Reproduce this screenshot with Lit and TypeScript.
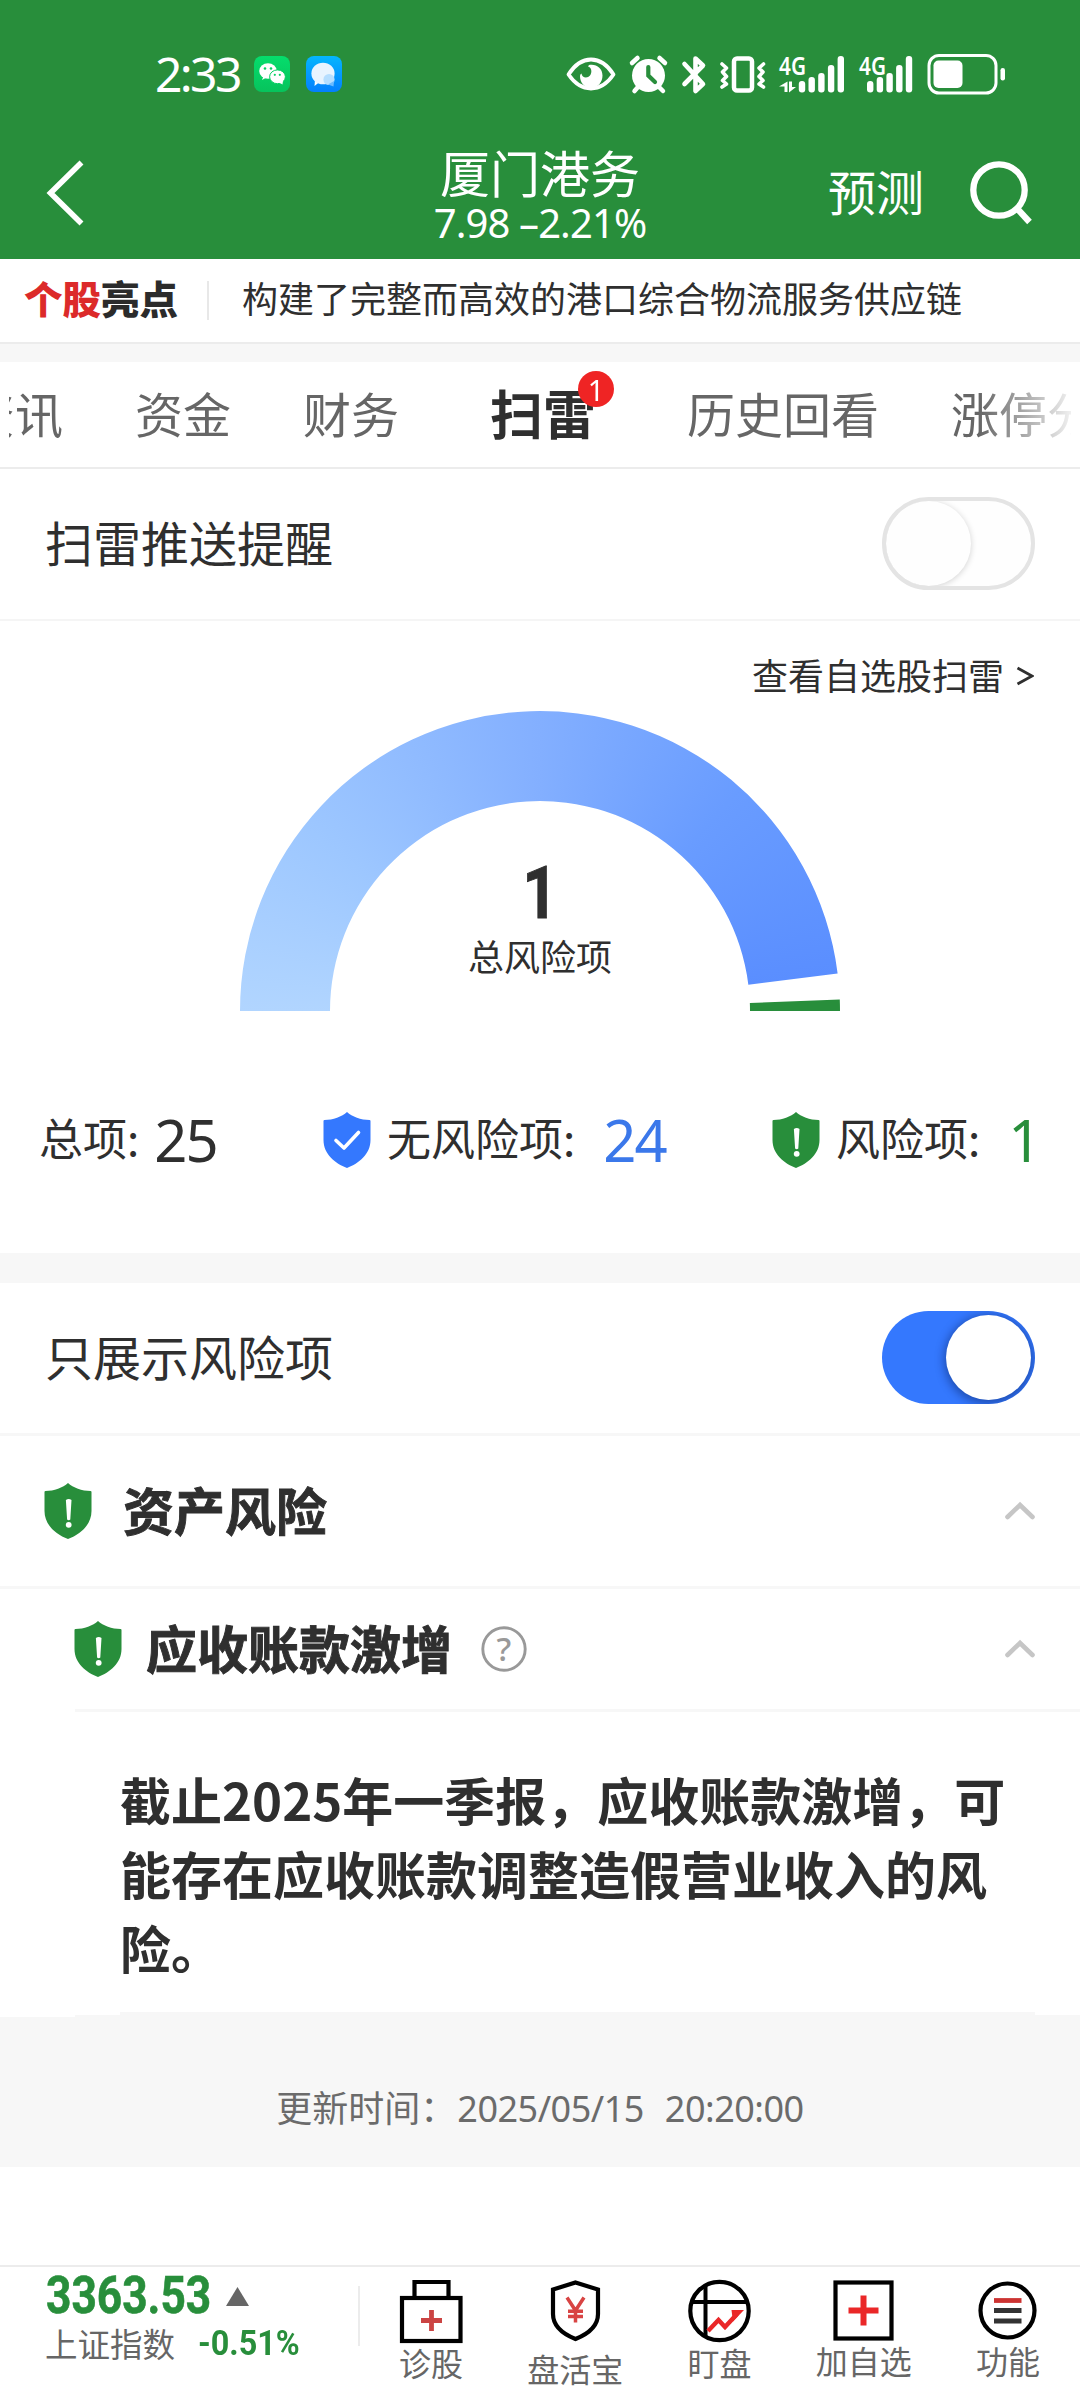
import { LitElement, html, css, svg } from "lit";
import { customElement, property } from "lit/decorators.js";
import { classMap } from "lit/directives/class-map.js";

@customElement("shield-icon")
class ShieldIcon extends LitElement {
  @property() kind = "risk";
  static styles = css`
    :host { display: block; width: 48px; height: 56px; flex: none; }
    .svg { display: block; }
    .risk { fill: #288e3b; }
    .safe { fill: #3478fe; }
    .tick { fill: none; stroke: #fff; stroke-width: 3.6; stroke-linecap: round; stroke-linejoin: round; }
    .mark { fill: #fff; }
  `;
  render() {
    const safe = this.kind === "safe";
    return html`<svg class="svg" width="48" height="56" viewBox="0 0 48 56">
      <path class=${safe ? "safe" : "risk"}
        d="M24 0C19 4.500 10 8 1.500 8Q0.500 8 0.500 9V28C0.500 42 12 51.500 24 56C36 51.500 47.500 42 47.500 28V9Q47.500 8 46.500 8C38 8 29 4.500 24 0Z"/>
      ${safe
        ? svg`<path class="tick" d="M13 28.500L21 36L35.500 20.500"/>`
        : svg`<path class="mark" d="M21.900 17Q24.700 15.200 27.500 17L26.300 36.500Q24.700 38 23.100 36.500Z"/><circle class="mark" cx="24.700" cy="41.800" r="2.900"/>`}
    </svg>`;
  }
}

@customElement("toggle-switch")
class ToggleSwitch extends LitElement {
  @property({ type: Boolean }) on = false;
  static styles = css`
    :host { display: block; flex: none; margin-top: -1px; }
    .track {
      box-sizing: border-box; width: 153px; height: 93px; border-radius: 47px; border: 4px solid #e4e4e4;
      background: #fefefe; display: flex; overflow: hidden;
    }
    .knob { width: 85px; height: 85px; border-radius: 50%; background: #fefefe; box-shadow: 0 1px 6px rgba(0, 0, 0, 0.18); }
    .track.on { background: #3478fe; border: 0; padding: 4px; justify-content: flex-end; }
    .track.on .knob { background: #fff; box-shadow: 0 2px 10px 2px rgba(0, 20, 70, 0.42); }
  `;
  render() {
    return html`<div class=${classMap({ track: true, on: this.on })}><div class="knob"></div></div>`;
  }
}

const BARS = [
  [0, 80], [9.7, 76], [19.4, 72], [29.1, 64], [38.8, 55],
];

function signal(x: number) {
  return BARS.map(([dx, y]) => svg`<rect x=${x + dx} y=${y} width="6.400" height=${91.5 - y} rx="3"/>`);
}

const statusIcons = html`<svg class="block" width="441" height="46" viewBox="567 50 441 46" fill="#fff">
  <path d="M569.500 73.500Q579 58.500 592 58.500T614.500 73.500Q605 87.500 592 87.500T569.500 73.500Z" fill="none" stroke="#fff" stroke-width="3.800" stroke-linejoin="round"/>
  <path d="M590 64C597 62.500 603.500 67 603.500 74.500C603.500 81 599 87 592 87C585 87 581 81 581 75Q581 73 582.500 72.500C583 77 588.500 77.500 591 74.500C593.500 71 592.500 66.500 589 65.500Z"/>
  <circle cx="649.500" cy="74.500" r="16.500"/>
  <path d="M633 62L638.500 57M666 62L660.500 57" stroke="#fff" stroke-width="4.500" stroke-linecap="round"/>
  <path d="M639 86L635.500 90M660 86L664 90" stroke="#fff" stroke-width="4.500" stroke-linecap="round"/>
  <path d="M649.300 66V74.500L656 81" fill="none" stroke="#288e3b" stroke-width="4.200" stroke-linecap="round"/>
  <path d="M685.500 63L704 83L696.500 90V57.500L704 64.500L685.500 83" fill="none" stroke="#fff" stroke-width="4.600" stroke-linecap="round" stroke-linejoin="round"/>
  <rect x="735" y="57.500" width="18" height="32" rx="3" fill="none" stroke="#fff" stroke-width="4.500"/>
  <path d="M723 63L727.500 67L723.500 71L727.500 75.500L723.500 79.500L727.500 83L723 86M764.500 63L760 67L764 71L760 75.500L764 79.500L760 83L764.500 86" fill="none" stroke="#fff" stroke-width="3.600" stroke-linecap="round" stroke-linejoin="round"/>
  <text class="net" x="780" y="73.500" textLength="27" lengthAdjust="spacingAndGlyphs">4G</text>
  <path d="M788.500 80.500V91H785.500V85.500H780Z M790 80.500H793V86H797L790 91.500Z"/>
  ${signal(799.8)}
  <text class="net" x="860" y="73.500" textLength="27" lengthAdjust="spacingAndGlyphs">4G</text>
  ${signal(868)}
  <rect x="930" y="54.500" width="67" height="37.500" rx="10" fill="none" stroke="#fff" stroke-width="3"/>
  <rect x="934.500" y="59.500" width="29" height="27.500" rx="5"/>
  <rect x="1001.500" y="67" width="4.500" height="12.500" rx="2.200"/>
</svg>`;

const appIcons = html`<svg class="block apps" width="88" height="36" viewBox="0 0 88 36">
  <defs>
    <linearGradient id="wx" x2="0" y2="1"><stop stop-color="#05dd6c"/><stop offset="1" stop-color="#07c35c"/></linearGradient>
    <linearGradient id="msg" x2="0" y2="1"><stop stop-color="#04b6fe"/><stop offset="1" stop-color="#047ffd"/></linearGradient>
  </defs>
  <rect width="36" height="36" rx="8" fill="url(#wx)"/>
  <path d="M8 24L9.500 20H15Z" fill="#fff"/><ellipse cx="14" cy="15" rx="8.800" ry="7.700" fill="#fff"/>
  <ellipse cx="23.500" cy="20.800" rx="7.900" ry="6.900" fill="#fff" stroke="#07cf63" stroke-width="1"/><path d="M28.500 28.500L24 26L29 24.500Z" fill="#fff"/>
  <g fill="#07d166"><circle cx="11" cy="12.500" r="1.300"/><circle cx="17" cy="12.500" r="1.300"/><circle cx="20.800" cy="18.800" r="1.100"/><circle cx="25.800" cy="18.800" r="1.100"/></g>
  <rect x="52" width="36" height="36" rx="8" fill="url(#msg)"/>
  <path d="M60.500 30L61 24H68Z" fill="#fff"/><ellipse cx="69" cy="17.500" rx="11.600" ry="10.800" fill="#e8f4ff"/>
  <circle cx="75" cy="23.500" r="5.600" fill="#b5deff"/><path d="M79.500 30.500L74 28.500L80 25Z" fill="#6cbbff"/>
</svg>`;

const TOOLS = [
  { label: "诊股", cls: "t1", icon: svg`<path d="M14.500 19V3H48.500V19" fill="none" stroke="#000" stroke-width="4.200"/><rect x="2" y="19" width="58.500" height="43" fill="none" stroke="#000" stroke-width="4.200"/><path d="M31.500 31V52M21 41.500H42" stroke="#cb4443" stroke-width="4.800"/>` },
  { label: "盘活宝", cls: "t2", icon: svg`<path d="M31.500 3.500L54 10.500V35C54 47 44 55 31.500 60C19 55 9 47 9 35V10.500Z" fill="none" stroke="#000" stroke-width="4.200"/><path d="M23 18.500L31.500 31.500L40 18.500M31.500 31V43.500M24 32.300H39M24 37.500H39" fill="none" stroke="#d84443" stroke-width="3.500"/>` },
  { label: "盯盘", cls: "t3", icon: svg`<path d="M17.500 6V58M5 23H58" stroke="#000" stroke-width="4"/><path d="M20 52L30.500 41L37 48L49 35" fill="none" stroke="#ea2728" stroke-width="4.400"/><path d="M43.500 31H56L45 42.500Z" fill="#ea2728"/><circle cx="31.500" cy="32" r="29.200" fill="none" stroke="#000" stroke-width="4.200"/>` },
  { label: "加自选", cls: "t4", icon: svg`<rect x="3.500" y="3.500" width="56" height="56" fill="none" stroke="#000" stroke-width="4.200"/><path d="M31.500 16.500V46.500M16.500 31.500H46.500" stroke="#ea2728" stroke-width="6"/>` },
  { label: "功能", cls: "t5", icon: svg`<circle cx="31.500" cy="31.500" r="27" fill="none" stroke="#000" stroke-width="4.200"/><path d="M18 21.500H45.500" stroke="#cc3331" stroke-width="4.800"/><path d="M18 31.500H45.500M18 42H45.500" stroke="#333" stroke-width="4.800"/>` },
];

const TABS = [
  { label: "资讯" }, { label: "资金" }, { label: "财务" },
  { label: "扫雷", active: true, badge: "1" },
  { label: "历史回看" }, { label: "涨停分析" },
];

const chevron = html`<svg class="block" width="30" height="18" viewBox="0 0 30 18"><path d="M2.500 15L15 3L27.500 15" fill="none" stroke="#c6c6c6" stroke-width="4.600" stroke-linecap="round"/></svg>`;

/** Ring sector between two angles measured clockwise from the left end. */
function sector(from: number, to: number, R = 300, r = 210) {
  const at = (deg: number, rad: number) => {
    const a = (deg * Math.PI) / 180;
    return `${(300 - rad * Math.cos(a)).toFixed(2)} ${(300 - rad * Math.sin(a)).toFixed(2)}`;
  };
  return `M${at(from, R)}A${R} ${R} 0 0 1 ${at(to, R)}L${at(to, r)}A${r} ${r} 0 0 0 ${at(from, r)}Z`;
}

@customElement("app-root")
class AppRoot extends LitElement {
  static styles = css`
    :host {
      display: block; width: 1080px; height: 2400px; overflow: hidden; background: #fff; color: #2f2f2f;
      font-family: "Noto Sans CJK SC", "Noto Sans", sans-serif;
    }
    .page { display: flex; flex-direction: column; height: 2400px; white-space: nowrap; }
    .page > * { flex: none; box-sizing: border-box; }
    .block { display: block; flex: none; overflow: visible; }
    .net { font: 600 26px "Noto Sans", sans-serif; }

    .header { background: #288e3b; color: #fff; height: 259px; }
    .status { height: 127px; box-sizing: border-box; padding: 21px 73px 0 155px; display: flex; align-items: center; }
    .clock { width: 99px; font-size: 48px; line-height: 50px; letter-spacing: -2.600px; font-family: "Noto Sans", sans-serif; }
    .apps { margin-right: auto; }
    .nav { height: 132px; display: grid; grid-template-columns: 1fr auto 1fr; align-items: center; padding: 0 46px; }
    .title { text-align: center; }
    .name { font-size: 50px; line-height: 54px; }
    .quote { font-size: 40px; line-height: 40px; letter-spacing: -0.900px; margin-top: 5px; font-family: "Noto Sans", sans-serif; }
    .actions { display: flex; justify-content: flex-end; align-items: center; gap: 45px; font-size: 48px; line-height: 60px; }
    .predict { margin-top: -6px; }

    .highlight { height: 85px; border-bottom: 2px solid #ececec; display: flex; align-items: center; padding-left: 24px; }
    .tag { font-size: 38.500px; font-weight: 900; color: #2b2b2b; width: 183px; line-height: 50px; margin-top: -7px; }
    .red { color: #dc2a2a; }
    .vline { width: 2px; height: 39px; background: #e8e8e8; }
    .desc { font-size: 36px; line-height: 50px; margin: -7px 0 0 33px; }
    .gap { background: #f7f7f7; height: 18px; }

    .tabs { height: 107px; border-bottom: 2px solid #ececec; padding: 0 9px; }
    .scroller { height: 105px; overflow: hidden; display: flex; justify-content: flex-start; mask-image: linear-gradient(to right, #000 970px, transparent 1072px); }
    .tab { flex: none; margin-right: 72px; font-size: 48px; line-height: 100px; color: #666; }
    .tab:first-child { margin-left: -42px; }
    .tab.active { width: 144px; text-align: center; color: #2f2f2f; font-size: 53px; font-weight: 700; position: relative; }
    .badge {
      position: absolute; left: 107px; top: 9px; width: 36px; height: 36px; border-radius: 50%;
      background: #ef2424; color: #fff; font: 400 29px/37px "Noto Sans", sans-serif; text-align: center;
    }

    .row { display: flex; align-items: center; justify-content: space-between; padding: 0 45px; font-size: 48px; }
    .row .label { margin-top: -6px; }
    .push { height: 152px; border-bottom: 2px solid #f5f5f5; }

    .summary { height: 632px; display: flex; flex-direction: column; align-items: stretch; }
    .link { font-size: 36px; line-height: 50px; margin-top: 28px; padding-right: 46px; display: flex; justify-content: flex-end; gap: 12px; }
    .gt { display: block; margin-top: 17px; }
    .gauge { width: 600px; height: 300px; margin: 12px auto 0; display: grid; }
    .gauge > * { grid-area: 1 / 1; }
    .arc { background: conic-gradient(from 270deg at 50% 100%, #b1d5ff 0deg, #9dc7ff 38deg, #83afff 90deg, #699cff 132deg, #5a8eff 173deg); }
    .center { display: flex; flex-direction: column; align-items: center; padding-top: 147px; }
    .total { font: 700 73px/70px Roboto, sans-serif; transform: scaleX(0.85); -webkit-text-stroke: 0.8px #2f2f2f; }
    .caption { font-size: 36px; line-height: 50px; margin-top: 2px; }
    .stats { display: flex; align-items: center; margin-top: 98px; height: 62px; padding-left: 39px; font-size: 44px; }
    .stat { display: flex; align-items: center; }
    .stat.a { width: 284px; }
    .stat.b { width: 449px; }
    .stat .lbl { margin-top: -6px; }
    .stat.b .lbl, .stat.c .lbl { margin-left: 16px; }
    .num { font: 400 58px/60px "Noto Sans", sans-serif; margin: 0 0 0 15px; letter-spacing: -2px; }
    .stat.b .num { margin-left: 28px; color: #3b78ea; }
    .stat.c .num { margin-left: 28px; color: #288e3b; }
    .thick { background: #f7f7f7; height: 30px; }

    .only { height: 153px; border-bottom: 3px solid #f7f7f7; }
    .group { height: 153px; border-bottom: 3px solid #f7f7f7; justify-content: flex-start; font-size: 51px; font-weight: 700; padding-left: 44px; }
    .group .label, .item .label { -webkit-text-stroke: 0.9px #2f2f2f; }
    .group .label { margin: -4px auto 0 31px; }
    .item { height: 123px; margin-left: 75px; padding-left: 0; border-bottom: 3px solid #f7f7f7; justify-content: flex-start; font-size: 51px; font-weight: 700; }
    .item shield-icon { margin-left: -1px; }
    .item .label { margin: -4px 29px 0 24px; }
    .item .help { margin-right: auto; }
    .q { font: 500 33px "Noto Sans", sans-serif; fill: #999; }
    .detail { height: 303px; margin: 0 45px 0 120px; padding-top: 50px; border-bottom: 3px solid #f7f7f7; font-size: 51px; line-height: 74px; font-weight: 700; white-space: normal; word-break: break-all; }
    .detail p { margin: 0; }
    .edge { height: 2px; background: #f7f7f7; margin-left: 75px; }
    .updated { height: 150px; background: #f7f7f7; color: #6b6b6b; display: flex; align-items: baseline; justify-content: center; font-size: 36px; line-height: 50px; padding-top: 64px; }
    .date { font-family: "Noto Sans", sans-serif; letter-spacing: -0.5px; margin-left: 1px; }
    .time { margin-left: 21px; }
    .spacer { height: 98px; }

    .bottom { height: 135px; border-top: 2px solid #ececec; display: flex; }
    .index { width: 358px; padding: 10px 0 0 46px; box-sizing: border-box; color: #288e3b; }
    .line1 { display: flex; align-items: center; height: 38px; }
    .value { width: 180px; font: 700 51px/38px Roboto, sans-serif; -webkit-text-stroke: 0.6px #288e3b; }
    .value span { display: inline-block; transform: scaleX(0.868); transform-origin: 0 50%; }
    .line2 { display: flex; align-items: center; height: 44px; margin-top: 6px; font-size: 32.500px; line-height: 44px; color: #666; margin-left: -1px; }
    .pct { font: 700 35px/44px Roboto, sans-serif; color: #288e3b; transform: scaleX(0.925); transform-origin: 0 50%; margin-left: 23px; padding-top: 2px; }
    .vline2 { width: 2px; height: 60px; background: #ececec; margin-top: 19px; }
    .tools { flex: 1; display: grid; grid-template-columns: repeat(5, 1fr); margin-left: -1px; }
    .tool { display: flex; flex-direction: column; align-items: center; font-size: 32px; line-height: 40px; color: #666; padding-top: 12px; }
    .txt { margin-top: -3px; }
    .t2 .txt { margin-top: 5px; }
    .t3 .txt { margin-top: -1px; }
    .t1 .txt { margin-top: -1px; }
  `;

  render() {
    return html`<div class="page">
      <div class="header">
        <div class="status"><div class="clock">2:33</div>${appIcons}${statusIcons}</div>
        <div class="nav">
          <svg class="block" width="40" height="64" viewBox="0 0 40 64"><path d="M35.500 1.500L4.500 32L35.500 62.500" fill="none" stroke="#fff" stroke-width="5.600"/></svg>
          <div class="title"><div class="name">厦门港务</div><div class="quote">7.98 –2.21%</div></div>
          <div class="actions">
            <span class="predict">预测</span>
            <svg class="block" width="65" height="66" viewBox="0 0 65 66"><circle cx="30" cy="30" r="25.700" fill="none" stroke="#fff" stroke-width="6.300"/><path d="M47.500 48L60.500 62" stroke="#fff" stroke-width="6.300"/></svg>
          </div>
        </div>
      </div>

      <div class="highlight">
        <div class="tag"><span class="red">个股</span>亮点</div><div class="vline"></div>
        <div class="desc">构建了完整而高效的港口综合物流服务供应链</div>
      </div>
      <div class="gap"></div>

      <div class="tabs"><div class="scroller">
        ${TABS.map((t) => html`<div class=${classMap({ tab: true, active: !!t.active })}>${t.label}${t.badge ? html`<span class="badge">${t.badge}</span>` : ""}</div>`)}
      </div></div>

      <div class="row push"><span class="label">扫雷推送提醒</span><toggle-switch></toggle-switch></div>

      <div class="summary">
        <div class="link"><span>查看自选股扫雷</span><svg class="gt" width="18" height="20" viewBox="0 0 18 20"><path d="M1.500 2L16 10L1.500 18" fill="none" stroke="#2f2f2f" stroke-width="2.800"/></svg></div>
        <div class="gauge">
          <div class="arc" style=${`clip-path: path("${sector(0, 172.8)}")`}></div>
          <svg width="600" height="300" viewBox="0 0 600 300"><path d=${sector(177.8, 180)} fill="#288e3b"/></svg>
          <div class="center"><div class="total">1</div><div class="caption">总风险项</div></div>
        </div>
        <div class="stats">
          <div class="stat a"><span class="lbl">总项:</span><span class="num">25</span></div>
          <div class="stat b"><shield-icon kind="safe"></shield-icon><span class="lbl">无风险项:</span><span class="num">24</span></div>
          <div class="stat c"><shield-icon></shield-icon><span class="lbl">风险项:</span><span class="num">1</span></div>
        </div>
      </div>
      <div class="thick"></div>

      <div class="row only"><span class="label">只展示风险项</span><toggle-switch on></toggle-switch></div>
      <div class="row group"><shield-icon></shield-icon><span class="label">资产风险</span>${chevron}</div>
      <div class="row item">
        <shield-icon></shield-icon><span class="label">应收账款激增</span>
        <svg class="block help" width="46" height="46" viewBox="0 0 46 46"><circle cx="23" cy="23" r="21.200" fill="none" stroke="#999" stroke-width="2.900"/><text class="q" x="23" y="35" text-anchor="middle">?</text></svg>
        ${chevron}
      </div>
      <div class="detail"><p>截止2025年一季报，应收账款激增，可能存在应收账款调整造假营业收入的风险。</p></div>
      <div class="edge"></div>
      <div class="updated"><span>更新时间：</span><span class="date">2025/05/15</span><span class="date time">20:20:00</span></div>
      <div class="spacer"></div>

      <div class="bottom">
        <div class="index">
          <div class="line1"><div class="value"><span>3363.53</span></div><svg class="block" width="23" height="19" viewBox="0 0 23 19"><path d="M11.500 0L23 19H0Z" fill="#666"/></svg></div>
          <div class="line2"><span>上证指数</span><span class="pct">-0.51%</span></div>
        </div>
        <div class="vline2"></div>
        <div class="tools">
          ${TOOLS.map((t) => html`<div class="tool ${t.cls}"><svg class="block" width="63" height="64" viewBox="0 0 63 64">${t.icon}</svg><span class="txt">${t.label}</span></div>`)}
        </div>
      </div>
    </div>`;
  }
}
